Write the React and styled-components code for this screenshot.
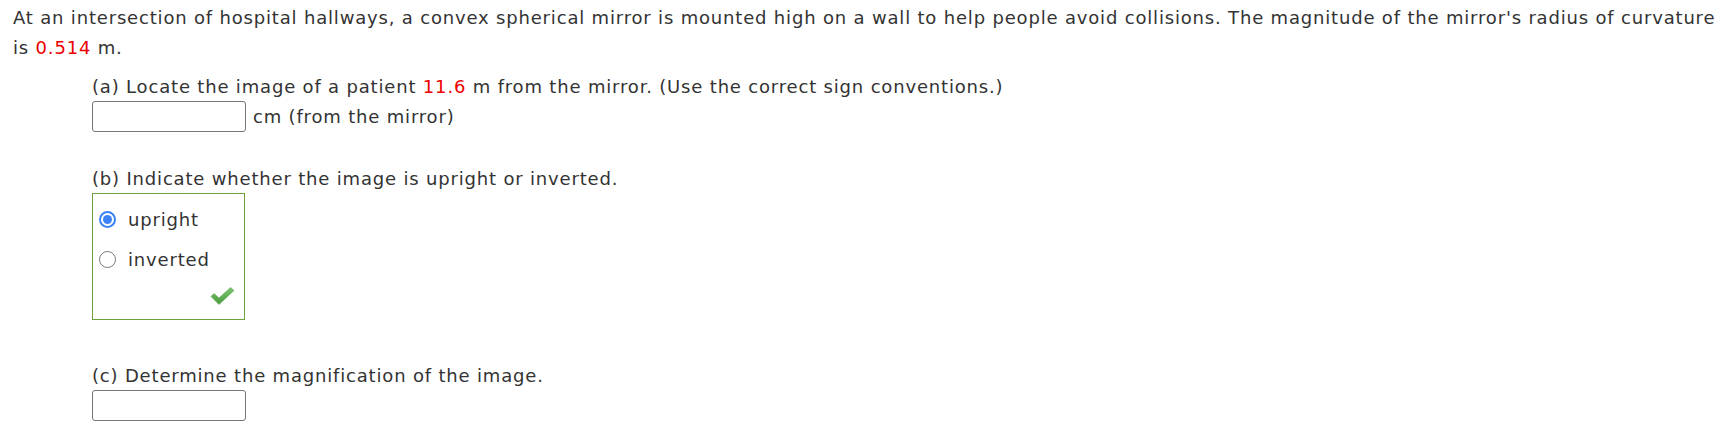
import React from "react";
import styled, { createGlobalStyle } from "styled-components";

const GlobalStyle = createGlobalStyle`
  body {
    margin: 0;
    background: #ffffff;
    font-family: "DejaVu Sans", Verdana, sans-serif;
    color: #333333;
  }
`;

const Page = styled.div`
  padding: 3px 4px 0 13px;
  font-size: 18px;
  letter-spacing: 0.82px;
`;

const Prompt = styled.p`
  margin: 0;
  line-height: 30px;
`;

const Value = styled.span`
  color: #ee0000;
`;

const Parts = styled.div`
  margin-left: 79px;
`;

const Part = styled.div`
  margin-top: ${props => props.gap}px;
`;

const QuestionLine = styled.div`
  line-height: 28px;
`;

const AnswerRow = styled.div`
  display: flex;
  align-items: center;
  gap: 7px;
  line-height: 28px;
`;

const AnswerBox = styled.input`
  box-sizing: border-box;
  width: 154px;
  height: 31px;
  margin: 0;
  border: 1px solid #767676;
  border-radius: 3px;
  background: #ffffff;
  font-family: inherit;
  font-size: 16px;
  padding: 0 6px;
`;

const Choices = styled.div`
  box-sizing: border-box;
  width: 153px;
  height: 127px;
  border: 1px solid #6ea23c;
  padding-top: 5px;
`;

const Choice = styled.label`
  display: flex;
  align-items: center;
  height: 40px;
  gap: 12px;
  padding-left: 6px;
`;

const Radio = styled.span`
  box-sizing: border-box;
  width: 17px;
  height: 17px;
  border-radius: 50%;
  background: #ffffff;
  border: ${props => (props.checked ? "2px solid #3b82f6" : "1px solid #767676")};
  display: flex;
  align-items: center;
  justify-content: center;
  &::after {
    content: "";
    width: 9px;
    height: 9px;
    border-radius: 50%;
    background: ${props => (props.checked ? "#3b82f6" : "transparent")};
  }
`;

const Feedback = styled.div`
  display: flex;
  justify-content: flex-end;
  padding: 8px 9px 0 0;
`;

function CheckMark() {
  return (
    <svg width="25" height="18" viewBox="0 0 25 18">
      <defs>
        <linearGradient id="ok" x1="0" y1="0" x2="0" y2="1">
          <stop offset="0" stopColor="#7cc66e" />
          <stop offset="1" stopColor="#4a9a3e" />
        </linearGradient>
      </defs>
      <path
        d="M1 9.5 L4 6.5 L9 11 L20.5 0.5 L24 3.5 L9 17.5 Z"
        fill="url(#ok)"
        stroke="#5aa84c"
        strokeWidth="0.6"
        strokeLinejoin="round"
      />
    </svg>
  );
}

export default function App() {
  return (
    <Page>
      <GlobalStyle />
      <Prompt>
        At an intersection of hospital hallways, a convex spherical mirror is mounted high on a wall to help people avoid collisions. The magnitude of the mirror's radius of curvature is <Value>0.514</Value> m.
      </Prompt>
      <Parts>
        <Part gap={10}>
          <QuestionLine>
            (a) Locate the image of a patient <Value>11.6</Value> m from the mirror. (Use the correct sign conventions.)
          </QuestionLine>
          <AnswerRow>
            <AnswerBox type="text" />
            <span>cm (from the mirror)</span>
          </AnswerRow>
        </Part>
        <Part gap={33}>
          <QuestionLine>(b) Indicate whether the image is upright or inverted.</QuestionLine>
          <Choices>
            <Choice>
              <Radio checked />
              upright
            </Choice>
            <Choice>
              <Radio />
              inverted
            </Choice>
            <Feedback>
              <CheckMark />
            </Feedback>
          </Choices>
        </Part>
        <Part gap={42}>
          <QuestionLine>(c) Determine the magnification of the image.</QuestionLine>
          <AnswerBox type="text" />
        </Part>
      </Parts>
    </Page>
  );
}
